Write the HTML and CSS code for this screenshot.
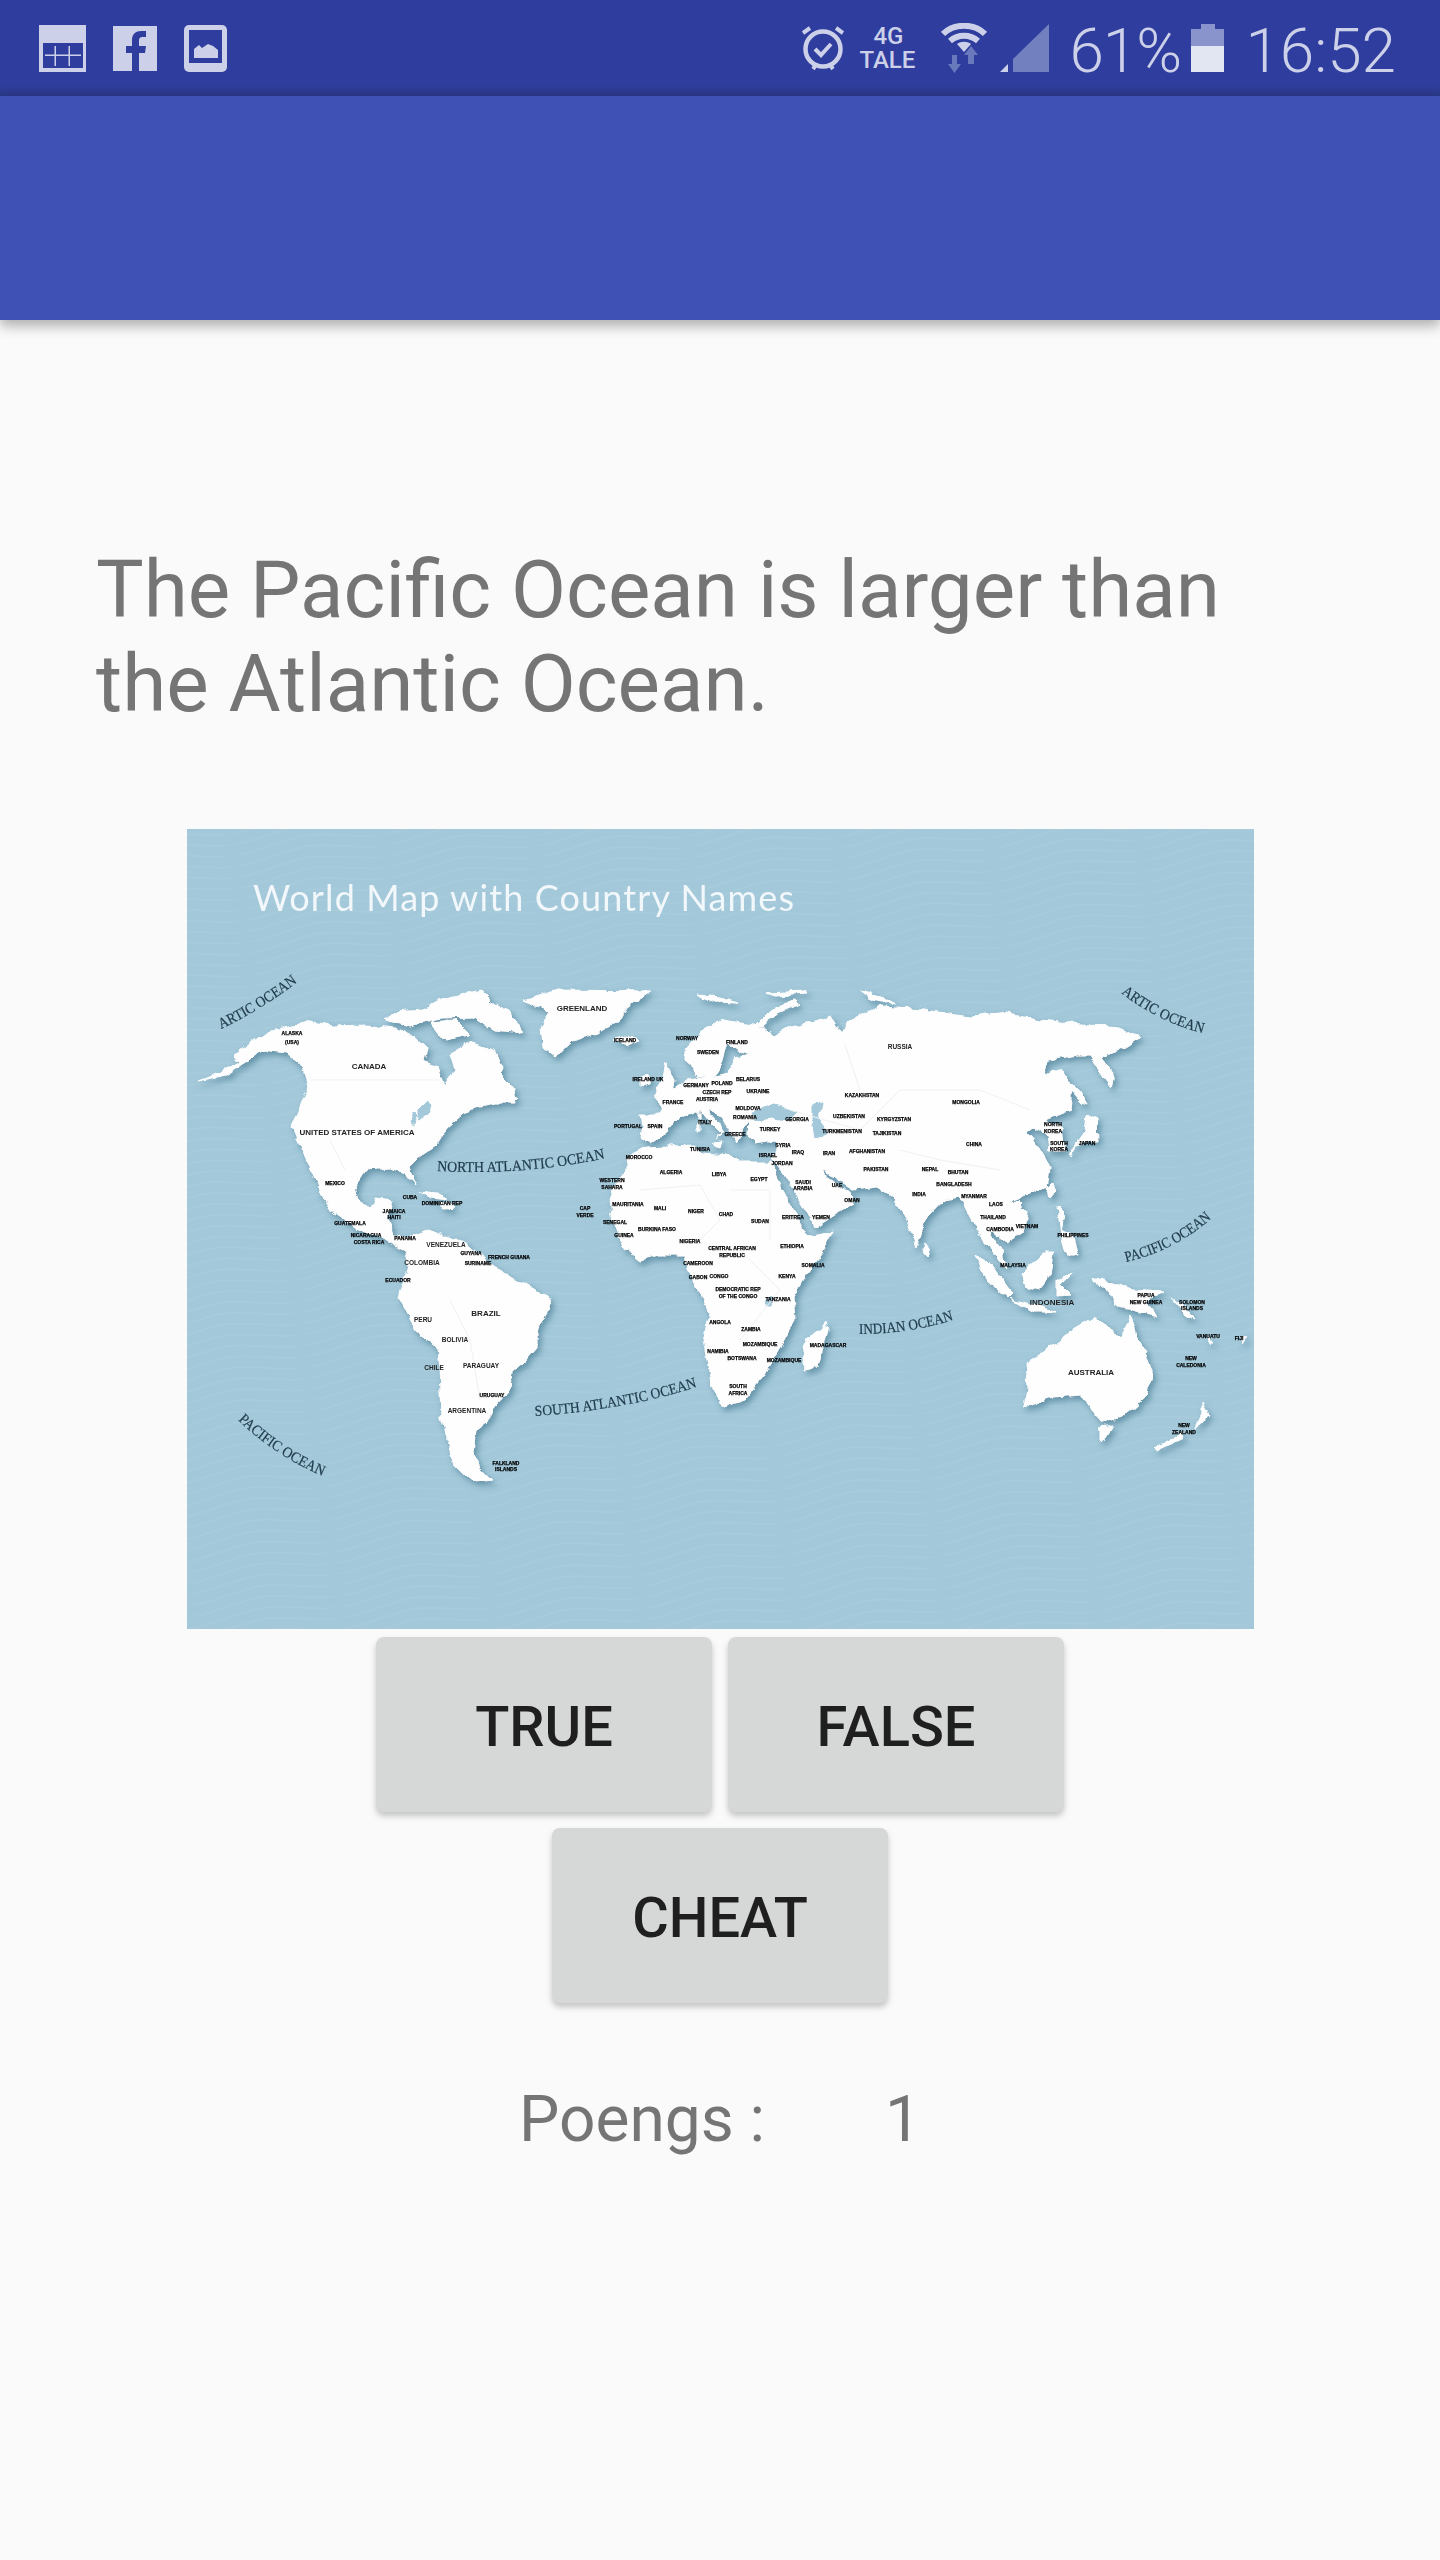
FILE: index.html
```html
<!DOCTYPE html>
<html>
<head>
  <title>GeoQuiz</title>
  <link rel="stylesheet" href="styles.css">
</head>
<body>
  <header class="status-bar">
    <div class="status-left">
      <svg class="icon" width="47" height="47" viewBox="0 0 47 47"><path class="fg" d="M0 0h47v47H0z"/><path class="bg" d="M4 18h40v25H4z"/><path class="fg" d="M6 29.500h36v1.500H6zM15.500 21h1.500v20h-1.500zM29.500 21h1.500v20h-1.500z"/></svg>
      <svg class="icon" width="44" height="45" viewBox="0 0 44 45"><path class="fg" d="M0 0h44v45H0z"/><path class="bg" d="M19 45V27h-6v-7h6v-6c0-6 4-9 9-9h5v6h-3c-3 0-4 1-4 4v5h7l-1 7h-6v18z"/></svg>
      <svg class="icon" width="43" height="47" viewBox="0 0 43 47"><rect class="fg" width="43" height="47" rx="5"/><path class="bg" d="M5 5h33v33H5z"/><path class="fg" d="M10 33V24l5-4 3 3 6-4 5 2 5 4v8z"/></svg>
    </div>
    <div class="status-right">
      <svg class="icon" width="42" height="48" viewBox="0 0 42 48"><circle class="line" cx="21" cy="25" r="17.500"/><path class="line thin" d="M13 25l6 6 10-11M11 45l3-4M31 45l-3-4M1 9l7-5M41 9l-7-5"/></svg>
      <div class="net-label"><span>4G</span><span>TALE</span></div>
      <svg class="icon wifi" width="46" height="50" viewBox="0 0 46 50"><path class="line arc" d="M2 11C13 0 33 0 44 11M9 18c8-7 20-7 28 0"/><path class="fg" d="M16 21c4-3 10-3 14 0l-7 8z"/><path class="dim" d="M11 32h5v9h4l-6.500 9-6.500-9h4zM27 41V32h-4l7-9 7 9h-4v9z"/></svg>
      <svg class="icon signal" width="49" height="48" viewBox="0 0 49 48"><path class="fg" d="M0 48l8-8v8z"/><path class="dim2" d="M13 35L49 0v48H13z"/></svg>
      <span class="status-text pct">61%</span>
      <svg class="icon battery" width="33" height="48" viewBox="0 0 33 48"><path class="dim3" d="M10 0h14v5h9v17H0V5h10z"/><path class="bright" d="M0 22h33v26H0z"/></svg>
      <span class="status-text clock">16:52</span>
    </div>
  </header>
  <div class="app-bar"></div>

  <main class="content">
    <p class="question">The Pacific Ocean is larger than the Atlantic Ocean.</p>

    <svg class="world-map" width="1067" height="800" viewBox="187 829 1067 800">
      <defs>
        <pattern id="waves" width="150" height="11" patternUnits="userSpaceOnUse" patternTransform="rotate(-8)">
          <path d="M0 6c37-7 38-7 75 0s38 7 75 0" fill="none" stroke="#fff" stroke-opacity=".07" stroke-width="1.500"/>
        </pattern>
        <filter id="coast" x="-5%" y="-5%" width="110%" height="110%">
          <feTurbulence type="fractalNoise" baseFrequency="0.09" numOctaves="3" seed="4" result="noise"/>
          <feDisplacementMap in="SourceGraphic" in2="noise" scale="7" xChannelSelector="R" yChannelSelector="G" result="rough"/>
          <feGaussianBlur in="rough" stdDeviation="0.5" result="soft"/>
          <feDropShadow in="soft" dx="3" dy="4" stdDeviation="3" flood-color="#46788f" flood-opacity="0.65"/>
        </filter>
      </defs>
      <rect class="sea" x="187" y="829" width="1067" height="800"/>
      <rect x="187" y="829" width="1067" height="800" fill="url(#waves)"/>
      <text class="map-title" x="253" y="911" textLength="541">World Map with Country Names</text>

      <g class="land" filter="url(#coast)">
        <!-- north america -->
        <path d="M198 1081 219 1073 239 1062 234 1056 251 1042 273 1031 310 1021 334 1026 366 1025 394 1028 416 1038 426 1047 423 1060 437 1068 444 1085 455 1070 450 1053 469 1042 494 1050 503 1067 500 1073 512 1085 516 1103 494 1103 476 1107 462 1115 448 1127 437 1145 419 1157 409 1167 416 1185 405 1173 391 1168 366 1170 355 1187 360 1203 372 1208 376 1198 392 1200 388 1218 394 1235 412 1237 430 1230 466 1243 494 1267 512 1278 551 1297 548 1313 537 1330 537 1347 523 1363 512 1370 510 1390 494 1407 487 1422 476 1430 473 1453 484 1473 491 1480 476 1482 455 1467 448 1440 441 1417 439 1367 437 1347 416 1330 398 1297 409 1263 405 1250 380 1237 359 1230 334 1213 323 1197 303 1153 292 1127 298 1113 309 1087 303 1067 287 1053 262 1050 244 1062 226 1075z"/>
        <path d="M384 1020 394 1012 423 1010 437 1000 480 990 490 1000 473 1017 440 1018 410 1025zM487 1000 509 1010 523 1033 494 1030 473 1017zM430 1022 455 1020 470 1035 445 1040z"/>
        <path d="M523 1000 555 990 651 991 626 1007 619 1020 598 1033 573 1040 555 1057 543 1047 541 1027 551 1012z"/>
        <path d="M613 1040 625 1036 638 1040 628 1045zM420 1192 436 1194 448 1200 430 1198zM438 1203 452 1203 456 1207 444 1208zM510 1092 518 1098 512 1103z"/>
        <!-- africa -->
        <path d="M627 1157 647 1147 693 1145 703 1153 727 1155 740 1162 773 1162 777 1180 793 1210 808 1237 833 1232 823 1253 807 1273 793 1297 795 1320 780 1347 772 1360 763 1377 745 1400 723 1407 712 1387 703 1340 709 1313 697 1287 688 1270 685 1255 660 1255 640 1260 623 1247 613 1223 610 1200 615 1183 627 1170z"/>
        <path d="M825 1322 827 1330 817 1367 805 1370 803 1357 808 1338 822 1330z"/>
        <!-- eurasia -->
        <path d="M640 1138 650 1143 667 1132 675 1120 692 1113 700 1110 712 1125 722 1135 716 1140 724 1130 710 1113 708 1108 722 1118 732 1135 737 1142 743 1128 748 1122 747 1135 755 1143 775 1140 777 1145 773 1160 783 1172 815 1227 830 1217 853 1203 850 1193 827 1177 820 1168 837 1180 853 1190 877 1187 893 1197 907 1220 917 1247 927 1217 943 1200 960 1197 970 1217 983 1240 997 1257 1007 1270 1003 1253 987 1227 1007 1243 1023 1233 1027 1213 1013 1200 1047 1187 1050 1167 1040 1147 1027 1133 1035 1127 1048 1135 1050 1150 1065 1150 1062 1130 1045 1120 1070 1110 1072 1085 1062 1070 1043 1075 1050 1060 1077 1055 1090 1055 1110 1088 1113 1073 1100 1057 1120 1050 1141 1037 1120 1028 1041 1020 1006 1012 970 1017 924 1010 881 1007 849 1020 841 1033 831 1017 791 1027 774 1037 763 1028 753 1025 723 1020 703 1030 685 1050 685 1060 693 1067 697 1077 713 1077 720 1067 727 1043 747 1055 733 1057 730 1073 703 1078 687 1080 677 1087 653 1095 663 1107 660 1115 640 1115 642 1127z"/>
        <path d="M665 1062 675 1080 673 1091 655 1094 661 1080zM640 1076 650 1074 649 1084 640 1086zM697 1122 700 1122 700 1131 697 1131zM697 1112 700 1112 700 1119 697 1119zM712 1143 722 1142 720 1147zM793 1000 770 1010 755 1025 762 1026 775 1014 800 1004zM697 995 720 997 737 1003 715 1002zM767 993 805 991 807 994 775 996zM860 991 880 996 897 1005 872 1000z"/>
        <!-- islands of east asia and oceania -->
        <path d="M1070 1157 1075 1147 1090 1140 1098 1142 1097 1120 1087 1115 1085 1130 1072 1148zM1063 1077 1075 1085 1087 1105 1082 1103 1068 1088zM1047 1188 1053 1182 1055 1190 1050 1196zM1018 1200 1022 1204 1018 1208 1014 1204zM925 1244 930 1250 928 1256 923 1250zM1057 1207 1065 1215 1060 1230 1072 1235 1078 1255 1068 1255 1062 1240zM1022 1273 1043 1253 1053 1253 1050 1277 1040 1290 1027 1287zM975 1255 993 1267 1012 1293 1007 1298 987 1280zM1010 1298 1033 1305 1057 1312 1033 1312zM1057 1280 1073 1272 1060 1285 1070 1295 1057 1296zM1093 1277 1113 1283 1133 1290 1163 1292 1147 1300 1157 1317 1133 1310 1117 1307 1113 1297 1100 1287zM1170 1297 1190 1313 1195 1320 1182 1312zM1208 1335 1212 1340 1210 1345zM1240 1337 1246 1338 1242 1344z"/>
        <path d="M1025 1363 1058 1343 1072 1330 1095 1317 1109 1327 1120 1340 1131 1315 1138 1340 1154 1370 1145 1397 1124 1417 1102 1422 1091 1410 1081 1395 1052 1397 1024 1407 1027 1387zM1100 1427 1113 1425 1105 1438 1100 1440zM1154 1448 1181 1433 1184 1438 1158 1450zM1202 1403 1211 1417 1195 1428 1202 1413z"/>
        <!-- inland water -->
        <path class="water" d="M752 1112 775 1105 798 1112 790 1120 772 1118 755 1120zM812 1105 822 1104 818 1118 827 1135 815 1138 812 1120zM420 1108 428 1100 430 1112 420 1120zM414 1112 418 1114 416 1124 411 1122zM766 1300 773 1296 771 1306 765 1306z"/>
      </g>

      <g class="borders">
        <path d="M310 1080H440M345 1170 330 1140M640 1190 700 1185 720 1220 700 1240M730 1190 770 1190 770 1240M790 1110 860 1130 900 1090 980 1090 1030 1110M845 1045 860 1090M900 1150 940 1160 1000 1170M740 1250 780 1290 740 1340M450 1300 470 1340 480 1400"/>
      </g>

      <g class="map-labels">
        <text x="292" y="1035">ALASKA</text><text x="292" y="1044">(USA)</text><text x="625" y="1042">ICELAND</text><text x="687" y="1040">NORWAY</text><text x="335" y="1185">MEXICO</text><text x="410" y="1199">CUBA</text><text x="442" y="1205">DOMINICAN REP</text>
        <text x="737" y="1044">FINLAND</text><text x="708" y="1054">SWEDEN</text><text x="648" y="1081">IRELAND UK</text><text x="696" y="1087">GERMANY</text><text x="722" y="1085">POLAND</text><text x="748" y="1081">BELARUS</text><text x="758" y="1093">UKRAINE</text><text x="717" y="1094">CZECH REP</text><text x="673" y="1104">FRANCE</text><text x="707" y="1101">AUSTRIA</text><text x="748" y="1110">MOLDOVA</text><text x="745" y="1119">ROMANIA</text>
        <text x="628" y="1128">PORTUGAL</text><text x="655" y="1128">SPAIN</text><text x="705" y="1124">ITALY</text><text x="735" y="1136">GREECE</text><text x="770" y="1131">TURKEY</text><text x="797" y="1121">GEORGIA</text><text x="862" y="1097">KAZAKHSTAN</text><text x="849" y="1118">UZBEKISTAN</text><text x="894" y="1121">KYRGYZSTAN</text><text x="842" y="1133">TURKMENISTAN</text><text x="887" y="1135">TAJIKISTAN</text><text x="867" y="1153">AFGHANISTAN</text>
        <text x="798" y="1154">IRAQ</text><text x="829" y="1155">IRAN</text><text x="783" y="1147">SYRIA</text><text x="768" y="1157">ISRAEL</text><text x="782" y="1165">JORDAN</text><text x="700" y="1151">TUNISIA</text><text x="639" y="1159">MOROCCO</text><text x="671" y="1174">ALGERIA</text><text x="719" y="1176">LIBYA</text><text x="759" y="1181">EGYPT</text><text x="803" y="1184">SAUDI</text><text x="803" y="1190">ARABIA</text><text x="837" y="1187">UAE</text><text x="852" y="1202">OMAN</text>
        <text x="876" y="1171">PAKISTAN</text><text x="919" y="1196">INDIA</text><text x="930" y="1171">NEPAL</text><text x="958" y="1174">BHUTAN</text><text x="954" y="1186">BANGLADESH</text><text x="612" y="1182">WESTERN</text><text x="612" y="1189">SAHARA</text><text x="628" y="1206">MAURITANIA</text><text x="660" y="1210">MALI</text><text x="696" y="1213">NIGER</text><text x="726" y="1216">CHAD</text><text x="760" y="1223">SUDAN</text><text x="793" y="1219">ERITREA</text><text x="821" y="1219">YEMEN</text><text x="585" y="1210">CAP</text><text x="585" y="1217">VERDE</text>
        <text x="615" y="1224">SENEGAL</text><text x="624" y="1237">GUINEA</text><text x="657" y="1231">BURKINA FASO</text><text x="690" y="1243">NIGERIA</text><text x="732" y="1250">CENTRAL AFRICAN</text><text x="732" y="1257">REPUBLIC</text><text x="792" y="1248">ETHIOPIA</text><text x="813" y="1267">SOMALIA</text><text x="698" y="1265">CAMEROON</text><text x="698" y="1279">GABON</text><text x="719" y="1278">CONGO</text><text x="787" y="1278">KENYA</text><text x="738" y="1291">DEMOCRATIC REP</text><text x="738" y="1298">OF THE CONGO</text><text x="778" y="1301">TANZANIA</text>
        <text x="720" y="1324">ANGOLA</text><text x="751" y="1331">ZAMBIA</text><text x="760" y="1346">MOZAMBIQUE</text><text x="718" y="1353">NAMIBIA</text><text x="742" y="1360">BOTSWANA</text><text x="828" y="1347">MADAGASCAR</text><text x="784" y="1362">MOZAMBIQUE</text><text x="738" y="1388">SOUTH</text><text x="738" y="1395">AFRICA</text>
        <text x="966" y="1104">MONGOLIA</text><text x="974" y="1146">CHINA</text><text x="1053" y="1126">NORTH</text><text x="1053" y="1133">KOREA</text><text x="1059" y="1145">SOUTH</text><text x="1059" y="1151">KOREA</text><text x="1087" y="1145">JAPAN</text><text x="974" y="1198">MYANMAR</text><text x="996" y="1206">LAOS</text><text x="993" y="1219">THAILAND</text><text x="1000" y="1231">CAMBODIA</text><text x="1027" y="1228">VIETNAM</text><text x="1073" y="1237">PHILIPPINES</text><text x="1013" y="1267">MALAYSIA</text><text x="1146" y="1297">PAPUA</text><text x="1146" y="1304">NEW GUINEA</text><text x="1192" y="1304">SOLOMON</text><text x="1192" y="1310">ISLANDS</text><text x="1208" y="1338">VANUATU</text><text x="1239" y="1340">FIJI</text><text x="1191" y="1360">NEW</text><text x="1191" y="1367">CALEDONIA</text><text x="1184" y="1427">NEW</text><text x="1184" y="1434">ZEALAND</text>
        <text x="350" y="1225">GUATEMALA</text><text x="366" y="1237">NICARAGUA</text><text x="369" y="1244">COSTA RICA</text><text x="405" y="1240">PANAMA</text><text x="394" y="1213">JAMAICA</text><text x="394" y="1219">HAITI</text><text x="471" y="1255">GUYANA</text><text x="509" y="1259">FRENCH GUIANA</text><text x="478" y="1265">SURINAME</text><text x="398" y="1282">ECUADOR</text><text x="492" y="1397">URUGUAY</text><text x="506" y="1465">FALKLAND</text><text x="506" y="1471">ISLANDS</text>
      </g>
      <g class="map-labels medium">
        <text x="423" y="1322">PERU</text><text x="455" y="1342">BOLIVIA</text><text x="434" y="1370">CHILE</text><text x="481" y="1368">PARAGUAY</text><text x="467" y="1413">ARGENTINA</text><text x="446" y="1247">VENEZUELA</text><text x="422" y="1265">COLOMBIA</text><text x="900" y="1049">RUSSIA</text>
      </g>
      <g class="map-labels large">
        <text x="369" y="1069">CANADA</text><text x="582" y="1011">GREENLAND</text><text x="357" y="1135">UNITED STATES OF AMERICA</text><text x="1052" y="1305">INDONESIA</text><text x="1091" y="1375">AUSTRALIA</text><text x="486" y="1316">BRAZIL</text>
      </g>

      <path id="arc-arctic-w" class="guide" d="M221 1029Q258 1012 299 981"/>
      <path id="arc-arctic-e" class="guide" d="M1121 993Q1160 1023 1206 1034"/>
      <path id="arc-natl" class="guide" d="M437 1171Q520 1176 607 1158"/>
      <path id="arc-satl" class="guide" d="M535 1416Q625 1410 700 1386"/>
      <path id="arc-pac-w" class="guide" d="M238 1420Q275 1456 325 1477"/>
      <path id="arc-ind" class="guide" d="M859 1334Q910 1334 956 1319"/>
      <path id="arc-pac-e" class="guide" d="M1126 1262Q1177 1250 1214 1216"/>
      <g class="ocean-labels">
        <text><textPath href="#arc-arctic-w" textLength="90" lengthAdjust="spacingAndGlyphs">ARTIC OCEAN</textPath></text>
        <text><textPath href="#arc-arctic-e" textLength="92" lengthAdjust="spacingAndGlyphs">ARTIC OCEAN</textPath></text>
        <text><textPath href="#arc-natl" textLength="169" lengthAdjust="spacingAndGlyphs">NORTH ATLANTIC OCEAN</textPath></text>
        <text><textPath href="#arc-satl" textLength="165" lengthAdjust="spacingAndGlyphs">SOUTH ATLANTIC OCEAN</textPath></text>
        <text><textPath href="#arc-pac-w" textLength="102" lengthAdjust="spacingAndGlyphs">PACIFIC OCEAN</textPath></text>
        <text><textPath href="#arc-ind" textLength="96" lengthAdjust="spacingAndGlyphs">INDIAN OCEAN</textPath></text>
        <text><textPath href="#arc-pac-e" textLength="97" lengthAdjust="spacingAndGlyphs">PACIFIC OCEAN</textPath></text>
      </g>
    </svg>

    <div class="button-row">
      <button class="quiz-btn">TRUE</button>
      <button class="quiz-btn">FALSE</button>
    </div>
    <div class="button-row">
      <button class="quiz-btn">CHEAT</button>
    </div>

    <div class="score">
      <span>Poengs :</span>
      <span>1</span>
    </div>
  </main>
</body>
</html>
```

FILE: styles.css
```css
body {
  margin: 0;
  height: 2560px;
  background-color: #fafafa;
  font-family: Roboto, sans-serif;
  overflow: hidden;
}

.status-bar {
  display: flex;
  justify-content: space-between;
  align-items: center;
  height: 96px;
  box-sizing: border-box;
  padding: 0 44px 0 39px;
  background: linear-gradient(#2f3e9e 0, #2f3e9e 86%, #2b3888 100%);
  color: #ccd0e8;
}

.status-left {
  display: flex;
  align-items: center;
  gap: 27px;
}

.status-right {
  display: flex;
  align-items: center;
}

.icon {
  display: block;
}

.fg {
  fill: #ccd0e8;
}

.bg {
  fill: #2f3e9e;
}

.dim {
  fill: #6a78bc;
}

.dim2 {
  fill: #7380bf;
}

.dim3 {
  fill: #8a94cc;
}

.bright {
  fill: #e2e5f2;
}

.line {
  fill: none;
  stroke: #ccd0e8;
  stroke-width: 4.5;
}

.thin {
  stroke-width: 4;
}

.arc {
  stroke-width: 6;
}

.net-label {
  display: flex;
  flex-direction: column;
  align-items: flex-end;
  width: 54px;
  margin-left: 17px;
  font-size: 24px;
  font-weight: 500;
  line-height: 24px;
}

.net-label span:first-child {
  margin-right: 12px;
}

.wifi {
  margin-left: 26px;
}

.signal {
  margin-left: 13px;
}

.status-text {
  margin-top: 6px;
  font-size: 62px;
  font-weight: 300;
  line-height: 60px;
}

.pct {
  margin-left: 20px;
  width: 112px;
  letter-spacing: -1px;
}

.battery {
  margin-left: 10px;
}

.clock {
  margin-left: 21px;
}

.app-bar {
  height: 224px;
  background-color: #3f51b5;
  box-shadow: 0 6px 12px rgba(0, 0, 0, 0.3);
}

.content {
  display: flex;
  flex-direction: column;
  align-items: center;
}

.question {
  align-self: flex-start;
  width: 1200px;
  margin: 224px 0 0 96px;
  font-size: 80px;
  line-height: 93.75px;
  color: #757575;
}

.world-map {
  display: block;
  margin-top: 97px;
}

.sea {
  fill: #a2c8d9;
}

.map-title {
  font-family: Lato, sans-serif;
  font-size: 36px;
  fill: #fff;
  fill-opacity: 0.85;
  filter: blur(0.5px);
}

.land {
  fill: #fefefe;
  stroke: #fefefe;
  stroke-width: 1;
  stroke-linejoin: round;
}

.land .water {
  fill: #a2c8d9;
  stroke: #a2c8d9;
}

.borders {
  fill: none;
  stroke: #eef1f3;
  stroke-width: 1;
}

.map-labels {
  font-family: "Liberation Sans", sans-serif;
  font-size: 5px;
  font-weight: 700;
  text-anchor: middle;
  fill: #000;
  stroke: #000;
  stroke-width: 0.25px;
  filter: blur(0.45px);
}

.map-labels.medium {
  font-size: 6.500px;
  stroke: none;
  fill: #222;
}

.map-labels.large {
  font-size: 8px;
  stroke: none;
  fill: #222;
}

.guide {
  fill: none;
}

.ocean-labels {
  font-family: "Liberation Serif", serif;
  font-size: 15px;
  fill: #1f3a4a;
  stroke: #1f3a4a;
  stroke-width: 0.2px;
  filter: blur(0.35px);
}

.button-row {
  display: flex;
  justify-content: center;
  gap: 16px;
  margin-top: 8px;
}

.button-row + .button-row {
  margin-top: 16px;
}

.quiz-btn {
  width: 336px;
  height: 175px;
  padding: 6px 0 0;
  border: none;
  border-radius: 8px;
  background-color: #d6d7d7;
  box-shadow: 0 4px 6px rgba(0, 0, 0, 0.22);
  font-family: Roboto, sans-serif;
  font-size: 56px;
  font-weight: 500;
  color: #1f1f1f;
}

.score {
  display: flex;
  justify-content: center;
  gap: 120px;
  margin-top: 79px;
  font-size: 64px;
  line-height: 75px;
  color: #757575;
}
```
